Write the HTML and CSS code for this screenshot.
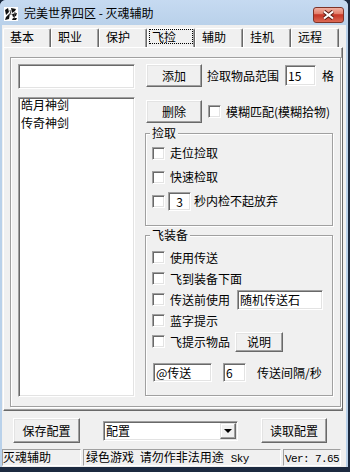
FILE: index.html
```html
<!DOCTYPE html>
<html>
<head>
	<title>完美世界四区 - 灭魂辅助</title>
	<link rel="stylesheet" href="styles.css">
</head>
<body>

<div class="window">

	<div class="titlebar">
		<svg class="appicon" width="14" height="14" viewBox="0 0 14 14">
			<rect width="14" height="14" fill="#fff"/>
			<path d="M1 3 L4 1 L5 5 L2 8 Z M2 10 L6 6 L5 12 L1 13 Z M7 1 L12 2 L11 4 L8 6 Z M8 7 L13 6 L12 9 L9 10 Z M9 11 L13 11 L12 13 L8 13 Z" fill="#111"/>
			<path d="M6 3 L7 8 M11 5 L10 12" stroke="#444" stroke-width="1"/>
		</svg>
		<span class="title">完美世界四区 - 灭魂辅助</span>
		<div class="close">
			<svg width="15" height="10" viewBox="0 0 15 10">
				<path d="M3 1.5 L12 8.5 M12 1.5 L3 8.5" stroke="#5a1c14" stroke-width="4"/>
				<path d="M3 1.5 L12 8.5 M12 1.5 L3 8.5" stroke="#fff" stroke-width="2.2"/>
			</svg>
		</div>
	</div>

	<div class="client">

		<ul class="tabs">
			<li>基本</li>
			<li>职业</li>
			<li>保护</li>
			<li class="current"><span>飞捡</span></li>
			<li>辅助</li>
			<li>挂机</li>
			<li>远程</li>
		</ul>

		<div class="panel">
			<div class="frame">

				<div class="leftcol">
					<input class="edit itemname" type="text">
					<ul class="listbox">
						<li>皓月神剑</li>
						<li>传奇神剑</li>
					</ul>
				</div>

				<div class="rightcol">
					<div class="toprow">
						<button class="btn small">添加</button>
						<span class="range">捡取物品范围</span>
						<input class="edit range-num" type="text" value="15">
						<span class="unit">格</span>
					</div>
					<div class="toprow second">
						<button class="btn small">删除</button>
						<input class="cb fuzzy" type="checkbox">
						<span class="cblabel">模糊匹配(模糊拾物)</span>
					</div>

					<div class="group pick">
						<span class="legend">捡取</span>
						<div class="opt"><input class="cb" type="checkbox"><span class="cblabel">走位捡取</span></div>
						<div class="opt"><input class="cb" type="checkbox"><span class="cblabel">快速检取</span></div>
						<div class="opt"><input class="cb" type="checkbox"><input class="edit secs" type="text" value="3"><span class="after">秒内检不起放弃</span></div>
					</div>

					<div class="group fly">
						<span class="legend">飞装备</span>
						<div class="opt"><input class="cb" type="checkbox"><span class="cblabel">使用传送</span></div>
						<div class="opt"><input class="cb" type="checkbox"><span class="cblabel">飞到装备下面</span></div>
						<div class="opt"><input class="cb" type="checkbox"><span class="cblabel">传送前使用</span><input class="edit stone" type="text" value="随机传送石"></div>
						<div class="opt"><input class="cb" type="checkbox"><span class="cblabel">蓝字提示</span></div>
						<div class="opt"><input class="cb" type="checkbox"><span class="cblabel">飞提示物品</span><button class="btn explain">说明</button></div>
						<div class="sendrow">
							<input class="edit cmd" type="text" value="@传送">
							<input class="edit interval" type="text" value="6">
							<span class="sendlabel">传送间隔/秒</span>
						</div>
					</div>
				</div>

			</div>
		</div>

		<div class="actions">
			<button class="btn wide">保存配置</button>
			<div class="combo"><span>配置</span><span class="drop"></span></div>
			<button class="btn wide load">读取配置</button>
		</div>

		<div class="statusbar">
			<div class="cell c1">灭魂辅助</div>
			<div class="cell c2">绿色游戏 请勿作非法用途<span class="mono sky">Sky</span></div>
			<div class="cell c3"><span class="mono">Ver: 7.65</span></div>
		</div>

	</div>
</div>

</body>
</html>
```

FILE: styles.css
```css
* {
	box-sizing: border-box;
}

body {
	margin: 0;
	width: 350px;
	height: 472px;
	overflow: hidden;
	background-color: #1c2a40;
	font-family: "Noto Sans CJK SC", sans-serif;
	font-size: 12px;
	line-height: 14px;
	color: #000;
}

ul {
	list-style: none;
	margin: 0;
	padding: 0;
}

input, button {
	font: inherit;
	color: #000;
	margin: 0;
	outline: none;
}

.window {
	width: 348px;
	height: 467px;
	background-color: #b9d1ea;
	border-radius: 6px 6px 0 0;
	display: flex;
	flex-direction: column;
}

/* title bar */

.titlebar {
	height: 25px;
	flex: none;
	display: flex;
	align-items: center;
	padding-left: 4px;
	background: linear-gradient(#c6daf1, #b9d1ea);
	border-radius: 6px 6px 0 0;
}

.appicon {
	flex: none;
	margin-top: 3px;
}

.title {
	margin-left: 6px;
	margin-top: 1px;
}

.close {
	align-self: flex-start;
	margin: 7px 4px 0 auto;
	width: 31px;
	height: 16px;
	border: 1px solid #7d3328;
	border-radius: 3px;
	background: linear-gradient(#f0b0a2 0%, #e4806c 40%, #c8392a 48%, #c93d2c 58%, #dc6a55 100%);
	display: flex;
	align-items: center;
	justify-content: center;
}

/* client area */

.client {
	flex: 1;
	margin: 0 2px;
	background-color: #f0f0f0;
	display: flex;
	flex-direction: column;
}

.tabs {
	display: flex;
	margin: 3px 0 0 1px;
	height: 19px;
}

.tabs li {
	width: 48px;
	height: 19px;
	padding: 1px 0 0 6px;
	border-left: 1px solid #fff;
	border-top: 1px solid #fff;
	border-right: 1px solid #696969;
	box-shadow: inset -1px 0 0 #a0a0a0;
	border-radius: 2px 2px 0 0;
}

.tabs li.current {
	padding: 0;
}

.tabs li.current span {
	display: block;
	width: 44px;
	height: 15px;
	margin-left: 1px;
	padding-left: 2px;
	border: 1px dotted #000;
}

.panel {
	margin-left: 1px;
	width: 340px;
	height: 364px;
	border: 1px solid;
	border-color: #fff #696969 #696969 #fff;
	box-shadow: inset -1px -1px 0 #a0a0a0;
	padding: 9px 0 0 6px;
}

.frame {
	width: 331px;
	height: 350px;
	border: 1px solid #a0a0a0;
	box-shadow: 1px 1px 0 #fff, inset 1px 1px 0 #fff;
	padding: 6px 0 0 7px;
	display: flex;
}

/* common controls */

.edit {
	background-color: #fff;
	border: 1px solid;
	border-color: #a0a0a0 #fff #fff #a0a0a0;
	box-shadow: inset 1px 1px 0 #696969, inset -1px -1px 0 #e3e3e3;
	padding: 0 0 0 2px;
	border-radius: 0;
}

.btn {
	background-color: #f0f0f0;
	border: 1px solid;
	border-color: #fff #696969 #696969 #fff;
	box-shadow: inset -1px -1px 0 #a0a0a0, inset 1px 1px 0 #e3e3e3;
	padding: 0;
	border-radius: 0;
	flex: none;
}

.cb {
	appearance: none;
	-webkit-appearance: none;
	width: 13px;
	height: 13px;
	margin: 0;
	flex: none;
	background-color: #fff;
	border: 1px solid;
	border-color: #a0a0a0 #fff #fff #a0a0a0;
	box-shadow: inset 1px 1px 0 #696969, inset -1px -1px 0 #e3e3e3;
}

.cblabel {
	margin-left: 5px;
	white-space: nowrap;
}

/* left column */

.leftcol {
	width: 117px;
	display: flex;
	flex-direction: column;
}

.itemname {
	width: 117px;
	height: 25px;
}

.listbox {
	margin-top: 8px;
	height: 300px;
	background-color: #fff;
	border: 1px solid;
	border-color: #a0a0a0 #fff #fff #a0a0a0;
	box-shadow: inset 1px 1px 0 #696969, inset -1px -1px 0 #e3e3e3;
	padding: 0 0 0 2px;
}

.listbox li {
	height: 18px;
	line-height: 18px;
}

.listbox li:first-child {
	margin-top: -2px;
}

/* right column */

.rightcol {
	width: 188px;
	margin-left: 10px;
	display: flex;
	flex-direction: column;
}

.toprow {
	height: 23px;
	display: flex;
	align-items: center;
}

.toprow.second {
	margin-top: 13px;
}

.btn.small {
	width: 56px;
	height: 23px;
	margin-left: 1px;
}

.range {
	margin-left: 5px;
	white-space: nowrap;
}

.range-num {
	width: 31px;
	height: 21px;
	margin-left: 6px;
}

.unit {
	margin-left: 6px;
}

.fuzzy {
	margin-left: 6px;
}

.group {
	border: 1px solid #a0a0a0;
	box-shadow: 1px 1px 0 #fff, inset 1px 1px 0 #fff;
	padding-left: 6px;
}

.legend {
	display: block;
	width: fit-content;
	margin: -7px 0 0 -2px;
	padding: 0 2px;
	line-height: 12px;
	background-color: #f0f0f0;
}

.pick {
	margin-top: 10px;
	padding-bottom: 12px;
}

.pick .legend {
	margin-bottom: 2px;
}

.pick .opt {
	height: 24px;
	display: flex;
	align-items: center;
}

.secs {
	width: 23px;
	height: 19px;
	margin-left: 3px;
	text-align: center;
	padding: 0;
}

.after {
	margin-left: 3px;
	white-space: nowrap;
}

.fly {
	margin-top: 9px;
	padding-bottom: 13px;
}

.fly .legend {
	margin-bottom: 6px;
}

.fly .opt {
	height: 21px;
	display: flex;
	align-items: center;
}

.stone {
	width: 86px;
	height: 20px;
	margin-left: 7px;
}

.btn.explain {
	width: 48px;
	height: 20px;
	margin-left: 5px;
}

.sendrow {
	margin-top: 11px;
	height: 19px;
	display: flex;
	align-items: center;
}

.cmd {
	width: 59px;
	height: 19px;
	margin-left: 1px;
}

.interval {
	width: 23px;
	height: 19px;
	margin-left: 11px;
}

.sendlabel {
	margin-left: 11px;
	white-space: nowrap;
}

/* bottom buttons */

.actions {
	margin-top: 7px;
	height: 25px;
	display: flex;
	align-items: center;
}

.btn.wide {
	width: 67px;
	height: 25px;
	margin-left: 11px;
}

.btn.load {
	width: 66px;
	margin-left: 23px;
}

.combo {
	margin-left: 23px;
	width: 135px;
	height: 20px;
	background-color: #fff;
	border: 1px solid;
	border-color: #a0a0a0 #fff #fff #a0a0a0;
	box-shadow: inset 1px 1px 0 #696969, inset -1px -1px 0 #e3e3e3;
	padding: 1px 1px 1px 2px;
	display: flex;
	align-items: center;
}

.drop {
	margin-left: auto;
	width: 16px;
	height: 16px;
	background-color: #f0f0f0;
	border: 1px solid;
	border-color: #e3e3e3 #696969 #696969 #e3e3e3;
	box-shadow: inset -1px -1px 0 #a0a0a0, inset 1px 1px 0 #fff;
	display: flex;
	align-items: center;
	justify-content: center;
}

.drop::after {
	content: "";
	border-top: 4px solid #000;
	border-left: 4px solid transparent;
	border-right: 4px solid transparent;
	margin-top: 1px;
}

/* status bar */

.statusbar {
	margin-top: 6px;
	height: 17px;
	display: flex;
	gap: 2px;
}

.cell {
	height: 17px;
	border: 1px solid;
	border-color: #a0a0a0 #fff #fff #a0a0a0;
	line-height: 14px;
	white-space: nowrap;
	overflow: hidden;
}

.c1 {
	width: 79px;
}

.c2 {
	width: 198px;
	padding-left: 2px;
	word-spacing: 3px;
}

.c3 {
	width: 58px;
	padding-left: 1px;
}

.mono {
	font-family: "Liberation Mono", monospace;
	font-size: 11px;
	letter-spacing: -0.6px;
}

.sky {
	margin-left: 7px;
}
```
